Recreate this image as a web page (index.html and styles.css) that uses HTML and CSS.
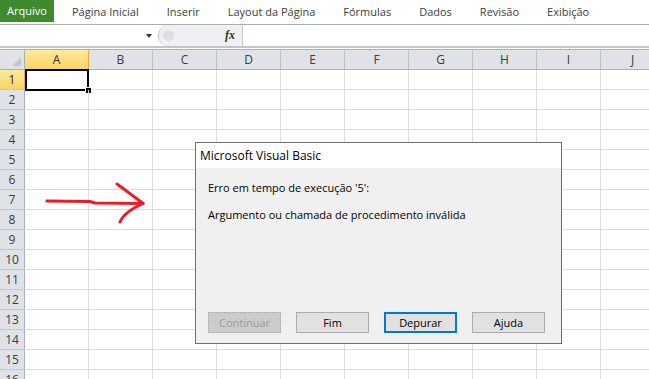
FILE: index.html
```html
<!DOCTYPE html>
<html lang="pt">
<head>
    <meta charset="UTF-8">
    <meta name="viewport" content="width=device-width, initial-scale=1.0">
    <title>Microsoft Excel - Erro de execução</title>
    <link rel="stylesheet" href="styles.css">
</head>
<body>
    <div class="tabs">
        <div class="tab file">Arquivo</div>
        <div class="tab">Página Inicial</div>
        <div class="tab">Inserir</div>
        <div class="tab">Layout da Página</div>
        <div class="tab">Fórmulas</div>
        <div class="tab">Dados</div>
        <div class="tab">Revisão</div>
        <div class="tab">Exibição</div>
    </div>

    <div class="formula-bar">
        <div class="name-box"><span class="drop"></span></div>
        <div class="fx-area">
            <span class="knob"></span>
            <span class="fx">fx</span>
        </div>
        <div class="formula-input"></div>
    </div>

    <div class="sheet">
        <div class="head">
            <div class="corner"></div>
            <div class="col active">A</div>
            <div class="col">B</div>
            <div class="col">C</div>
            <div class="col">D</div>
            <div class="col">E</div>
            <div class="col">F</div>
            <div class="col">G</div>
            <div class="col">H</div>
            <div class="col">I</div>
            <div class="col">J</div>
        </div>
        <div class="row"><div class="rh active">1</div><div class="cells"><div class="selected"></div></div></div>
        <div class="row"><div class="rh">2</div><div class="cells"></div></div>
        <div class="row"><div class="rh">3</div><div class="cells"></div></div>
        <div class="row"><div class="rh">4</div><div class="cells"></div></div>
        <div class="row"><div class="rh">5</div><div class="cells"></div></div>
        <div class="row"><div class="rh">6</div><div class="cells"></div></div>
        <div class="row"><div class="rh">7</div><div class="cells"></div></div>
        <div class="row"><div class="rh">8</div><div class="cells"></div></div>
        <div class="row"><div class="rh">9</div><div class="cells"></div></div>
        <div class="row"><div class="rh">10</div><div class="cells"></div></div>
        <div class="row"><div class="rh">11</div><div class="cells"></div></div>
        <div class="row"><div class="rh">12</div><div class="cells"></div></div>
        <div class="row"><div class="rh">13</div><div class="cells"></div></div>
        <div class="row"><div class="rh">14</div><div class="cells"></div></div>
        <div class="row"><div class="rh">15</div><div class="cells"></div></div>
        <div class="row"><div class="rh">16</div><div class="cells"></div></div>
    </div>

    <svg class="arrow" width="120" height="70" viewBox="0 0 120 70">
        <path d="M7 31 L50 31.5 L55 33 L103 33.5" />
        <path d="M77 14 Q88 22 103 33.5" />
        <path d="M80 52 Q84 42 103 33.5" />
    </svg>

    <div class="dialog">
        <div class="dialog-title">Microsoft Visual Basic</div>
        <div class="dialog-body">
            <p class="msg">Erro em tempo de execução '5':</p>
            <p class="msg">Argumento ou chamada de procedimento inválida</p>
            <div class="buttons">
                <button class="btn" disabled>Continuar</button>
                <button class="btn">Fim</button>
                <button class="btn default">Depurar</button>
                <button class="btn">Ajuda</button>
            </div>
        </div>
    </div>
</body>
</html>
```

FILE: styles.css
```css
body {
    margin: 0;
    font-family: "Open Sans", "Noto Sans", sans-serif;
    background-color: #fff;
    width: 649px;
    height: 379px;
    overflow: hidden;
    position: relative;
}

/* ribbon tabs */
.tabs {
    display: flex;
    height: 24px;
    border-bottom: 1px solid #a9aeb5;
    font-size: 11px;
    color: #3c3c3c;
}
.tab {
    padding: 0 14px;
    line-height: 23px;
    white-space: nowrap;
}
.tab.file {
    width: 54px;
    height: 22px;
    padding: 0;
    margin-right: 4px;
    text-align: center;
    line-height: 22px;
    background-color: #3f8a2f;
    color: #fff;
}

/* formula bar */
.formula-bar {
    display: flex;
    height: 21px;
    border-bottom: 2px solid #c3c7cc;
}
.name-box {
    width: 158px;
    position: relative;
}
.drop {
    position: absolute;
    right: 6px;
    top: 9px;
    border-left: 3px solid transparent;
    border-right: 3px solid transparent;
    border-top: 4px solid #333;
}
.fx-area {
    width: 72px;
    display: flex;
    align-items: center;
    justify-content: space-between;
    padding: 0 7px 0 4px;
    background-color: #eef0f2;
    border-left: 1px solid #c3c7cc;
    border-right: 1px solid #c3c7cc;
    border-radius: 10px 0 0 10px;
}
.knob {
    width: 11px;
    height: 11px;
    border-radius: 50%;
    background-color: #dcdfe3;
}
.fx {
    font-family: "Liberation Serif", serif;
    font-style: italic;
    font-weight: bold;
    font-size: 12px;
    color: #333;
}
.formula-input {
    flex: 1;
}

/* sheet grid */
.sheet {
    margin-top: 1px;
    font-size: 12px;
    color: #3a3a3a;
}
.head {
    display: flex;
    height: 19px;
    border-top: 1px solid #a9b0b8;
    border-bottom: 1px solid #a9b0b8;
    background-color: #dfe3e8;
}
.corner {
    width: 24px;
    flex-shrink: 0;
    border-right: 1px solid #a9b0b8;
    position: relative;
}
.corner::after {
    content: "";
    position: absolute;
    right: 3px;
    bottom: 3px;
    border-left: 9px solid transparent;
    border-bottom: 9px solid #c3c8ce;
}
.col {
    width: 63px;
    flex-shrink: 0;
    border-right: 1px solid #bcc2ca;
    text-align: center;
    line-height: 19px;
}
.col.active, .rh.active {
    background: linear-gradient(#fde9a0, #fbd560);
    border-color: #f0a93a;
    color: #333;
}
.row {
    display: flex;
    height: 19px;
    border-bottom: 1px solid #dadcdd;
}
.rh {
    width: 24px;
    flex-shrink: 0;
    border-right: 1px solid #a9b0b8;
    background-color: #dfe3e8;
    text-align: center;
    line-height: 19px;
    box-shadow: 0 1px 0 #c3c8ce;
}
.cells {
    flex: 1;
    position: relative;
    background: repeating-linear-gradient(to right, transparent 0 63px, #dadcdd 63px 64px);
}
.selected {
    position: absolute;
    left: 0;
    top: -1px;
    width: 60px;
    height: 18px;
    border: 2px solid #000;
}
.selected::after {
    content: "";
    position: absolute;
    right: -5px;
    bottom: -5px;
    width: 5px;
    height: 5px;
    background-color: #000;
    border: 1px solid #fff;
}

/* red hand-drawn arrow */
.arrow {
    position: absolute;
    left: 40px;
    top: 170px;
}
.arrow path {
    fill: none;
    stroke: #ec1c24;
    stroke-width: 3;
    stroke-linecap: round;
    stroke-linejoin: round;
}

/* VBA error dialog */
.dialog {
    position: absolute;
    left: 195px;
    top: 142px;
    width: 365px;
    height: 200px;
    border: 1px solid #6f6f6f;
    background-color: #f0f0f0;
    font-size: 11px;
    color: #000;
}
.dialog-title {
    height: 25px;
    line-height: 25px;
    padding-left: 4px;
    background-color: #fff;
    font-size: 12px;
}
.dialog-body {
    padding: 11px 12px 0;
}
.msg {
    margin: 0 0 9px;
    line-height: 18px;
}
.buttons {
    display: flex;
    gap: 15px;
    margin-top: 88px;
}
.btn {
    width: 73px;
    height: 21px;
    padding: 0;
    font-family: inherit;
    font-size: 11px;
    color: #000;
    background-color: #e1e1e1;
    border: 1px solid #adadad;
}
.btn:disabled {
    background-color: #cccccc;
    border: 1px dotted #a8a8a8;
    color: #9a9a9a;
}
.btn.default {
    border: 2px solid #0078d7;
}
```
